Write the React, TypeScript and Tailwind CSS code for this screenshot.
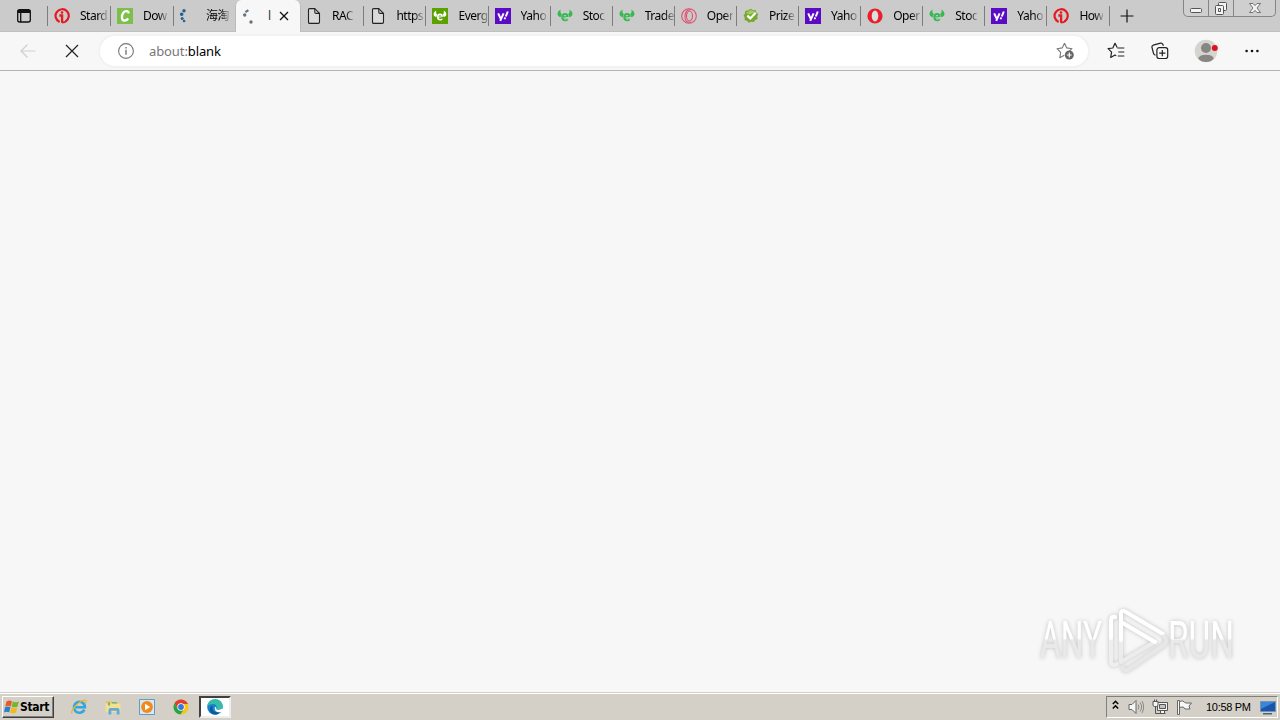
import { ReactNode } from 'react';
import clsx from 'clsx';

type TabItem = {
  title: string;
  icon: ReactNode;
};

const ITopIcon = () => (
  <svg className="size-4" viewBox="0 0 16 16" fill="none" stroke="#e51a23">
    <path d="M5.600 13.900A6.600 6.600 0 1 1 11.500 13.500" strokeWidth="2.200" />
    <path d="M5.400 7.500h2.700v7.200" strokeWidth="2.300" />
    <path d="M8.100 14.700q3.400-.2 4.800-2.600" strokeWidth="1.800" />
    <circle cx="8" cy="4.500" r="1.300" fill="#e51a23" stroke="none" />
  </svg>
);

const CIcon = () => (
  <svg className="size-4" viewBox="0 0 16 16">
    <path d="M0 0h16v16H0z" fill="#7cc04b" />
    <path
      d="M11.700 5.300C11.500 2.700 8.200 2.400 6.300 4.800 4.300 7.400 4.400 12.500 7.300 12.700c1.700.1 2.900-.8 3.900-2.200"
      fill="none"
      stroke="#fff"
      strokeWidth="2.300"
    />
  </svg>
);

const DotsIcon = () => (
  <svg className="size-4" viewBox="0 0 16 16" fill="#23618f">
    <circle cx="4" cy="2.800" r="1.700" />
    <circle cx="1.700" cy="6.200" r="1.800" />
    <circle cx="2.200" cy="10.400" r="1.500" />
    <circle cx="4.100" cy="13" r="1.300" />
  </svg>
);

const SpinnerIcon = () => (
  <svg className="size-4" viewBox="0 0 16 16" fill="#68747c">
    <path d="m1.800 3.300 3-2.100 1.200 1.700-3 2z" />
    <circle cx="1.700" cy="7" r="1.700" />
    <circle cx="8" cy="14" r="1.700" />
  </svg>
);

const PageIcon = () => (
  <svg
    className="size-4"
    viewBox="0 0 16 16"
    fill="#dadada"
    stroke="#222"
    strokeWidth="1.100"
    strokeLinejoin="round"
  >
    <path d="M2.500 1.800q0-1.200 1.200-1.200h5.100l4.700 4.800v8.700q0 1.300-1.200 1.300H3.700q-1.200 0-1.200-1.300z" />
    <path d="M8.800.8v3.400q0 1.200 1.200 1.200h3.400" fill="none" />
  </svg>
);

// horned "e" shared by the green and the boxed favicons
const BullShape = () => (
  <>
    <path d="M3.700 1.500C-.5 4-.7 8.200 3.900 9.300c-.1-1.400.3-2.300 1.200-3C3.600 5.400 3 3.700 3.700 1.500z" />
    <path d="M12.300 1.500c4.200 2.500 4.400 6.700-.2 7.800.1-1.400-.3-2.300-1.200-3 1.500-.9 2.100-2.600 1.400-4.800z" />
    <path
      d="M4.500 9h7c.2-2.400-1.200-4-3.500-4S4.300 6.800 4.300 9.200c0 2.500 1.500 4.100 3.800 4.100 1.700 0 2.800-.7 3.300-2.100H9.300c-.8.8-2.400.5-2.600-1h4.800zM6.700 8.300c.3-1.600 2.300-1.600 2.600 0z"
      fillRule="evenodd"
    />
  </>
);

const BullIcon = () => (
  <svg className="size-4" viewBox="0 0 16 16" fill="#35b950">
    <BullShape />
  </svg>
);

const BoxedBullIcon = () => (
  <svg className="size-4" viewBox="0 0 16 16">
    <path d="M0 0h16v16H0z" fill="#5ba100" />
    <g fill="#fff" transform="translate(1.200 1.200) scale(.85)">
      <BullShape />
    </g>
  </svg>
);

const YahooIcon = () => (
  <svg className="size-4" viewBox="0 0 16 16">
    <path d="M0 0h16v16H0z" fill="#5b0bc4" />
    <path
      d="m3.200 5.300 2.300 5M8.600 5.300 5.200 12.800M12.800 3.500l-2 5"
      fill="none"
      stroke="#fff"
      strokeWidth="2"
    />
    <circle cx="9.900" cy="10.300" r="1.100" fill="#fff" />
  </svg>
);

const OperaOutlineIcon = () => (
  <svg className="size-4" viewBox="0 0 16 16" fill="none" stroke="#e0506c" strokeWidth="1.100">
    <circle cx="8" cy="8" r="7.300" />
    <path d="M10 1.800Q4.500.8 4 8t6 6.200" />
    <ellipse cx="8.500" cy="8" rx="3" ry="5" />
  </svg>
);

const OperaIcon = () => (
  <svg className="size-4" viewBox="0 0 16 16">
    <circle cx="8" cy="8" r="7.600" fill="#e8202e" />
    <ellipse cx="8" cy="8" rx="3.300" ry="5.400" fill="#dedede" />
  </svg>
);

const PrizeIcon = () => (
  <svg className="size-4" viewBox="0 0 16 16">
    <path
      d="m8 .8 2 1.400 2.600-.1.700 2.300 1.900 1.700-.9 2.300.3 2.500-2.300 1-1.400 2.200-2.500-.4-2.500 1-1.800-1.800-2.500-.8.100-2.500L.6 7.500 2 5.500 2.200 3l2.500-.4z"
      fill="#75a92e"
    />
    <path d="m2.800 5 5-3 5 2-6 2.500z" fill="#a5cb65" />
    <path d="m4.300 7.600 3 2.800 5.400-5.600" fill="none" stroke="#fff" strokeWidth="2.200" />
  </svg>
);

const leadingTabs: TabItem[] = [
  { title: 'Stard', icon: <ITopIcon /> },
  { title: 'Dow', icon: <CIcon /> },
  { title: '海淘', icon: <DotsIcon /> },
];

const trailingTabs: TabItem[] = [
  { title: 'RAC', icon: <PageIcon /> },
  { title: 'https', icon: <PageIcon /> },
  { title: 'Everg', icon: <BoxedBullIcon /> },
  { title: 'Yaho', icon: <YahooIcon /> },
  { title: 'Stoc', icon: <BullIcon /> },
  { title: 'Trade', icon: <BullIcon /> },
  { title: 'Oper', icon: <OperaOutlineIcon /> },
  { title: 'Prize', icon: <PrizeIcon /> },
  { title: 'Yaho', icon: <YahooIcon /> },
  { title: 'Oper', icon: <OperaIcon /> },
  { title: 'Stoc', icon: <BullIcon /> },
  { title: 'Yaho', icon: <YahooIcon /> },
  { title: 'How', icon: <ITopIcon /> },
];

const Tab = ({ tab, className }: { tab: TabItem; className: string }) => (
  <div className={clsx('flex h-8 shrink-0 items-center', className)}>
    <span className="size-4 shrink-0">{tab.icon}</span>
    <span className="ml-[10px] whitespace-nowrap text-xs leading-4 tracking-[-0.5px] mask-r-from-65% mask-r-to-110%">
      {tab.title}
    </span>
  </div>
);

const Separator = () => <div className="h-5 w-px shrink-0 bg-[#7d7d7d]" />;

const WindowButtons = () => (
  <div className="ml-auto mr-[4px] flex h-[17px] self-start rounded-b-[5px] border border-t-0 border-[#858585] bg-[#cfcfcf]">
    <div className="flex w-[25px] justify-center border-r border-[#858585]">
      <svg className="h-4 w-6" viewBox="0 0 24 16" fill="#f4f4f4" stroke="#555">
        <rect x="6.500" y="8.500" width="11" height="4" rx="1" />
      </svg>
    </div>
    <div className="flex w-[25px] justify-center border-r border-[#858585]">
      <svg className="h-4 w-6" viewBox="0 0 24 16" fill="#f4f4f4" stroke="#555">
        <rect x="9.500" y="2.500" width="8" height="8" rx="1" />
        <rect x="6.500" y="5.500" width="8" height="9" rx="1" />
        <path d="M9.500 8.500h2v3h-2z" />
      </svg>
    </div>
    <div className="flex w-[41px] justify-center">
      <svg className="h-4 w-6" viewBox="0 0 24 16" fill="#f4f4f4" stroke="#666" strokeWidth=".9">
        <path d="M6.500 3.500h3.500l2 2.200 2-2.200h3.500l-3.500 4.500 3.500 4.500H14l-2-2.200-2 2.200H6.500L10 8z" />
      </svg>
    </div>
  </div>
);

const TabStrip = () => (
  <div className="flex h-8 items-center border-b border-[#c0c0c0] bg-[#cbcbcb]">
    <div className="flex w-[47px] shrink-0 items-center pl-4">
      <svg className="size-4" viewBox="0 0 16 16" fill="none" stroke="#111" strokeWidth="1.300">
        <rect x="1.700" y="1.700" width="12.600" height="12.300" rx="2" />
        <path d="M1.700 3.500h12.600" strokeWidth="3" />
        <path d="M4.700 4v10" />
      </svg>
    </div>
    {leadingTabs.map((tab) => (
      <div key={tab.title} className="-mr-px flex items-center">
        <Separator />
        <Tab tab={tab} className="w-[63px] pl-[6px]" />
      </div>
    ))}
    <div className="-ml-px mr-px flex h-8 w-[66px] shrink-0 items-center rounded-t-[6px] border-x border-[#bbb] bg-[#f7f7f7] pl-[7px]">
      <SpinnerIcon />
      <span className="ml-[9px] w-[5px] text-xs leading-4 text-[#333]">l</span>
      <svg
        className="ml-[6px] size-[10px]"
        viewBox="0 0 10 10"
        stroke="#111"
        strokeWidth="1.300"
      >
        <path d="m1 1 8 8M9 1 1 9" />
      </svg>
    </div>
    {trailingTabs.map((tab, i) => (
      <div key={i} className="-ml-px flex items-center">
        <Tab
          tab={tab}
          className={i === 0 ? 'w-[62.4px] pl-[5px]' : 'w-[62.1px] pl-[7px]'}
        />
        <Separator />
      </div>
    ))}
    <svg className="ml-[10px] size-[14px] shrink-0" viewBox="0 0 14 14" stroke="#111" strokeWidth="1.200">
      <path d="M7 .5v13M.5 7h13" />
    </svg>
    <WindowButtons />
  </div>
);

const Toolbar = () => (
  <div className="flex h-[39px] items-center border-b border-[#b4b4b4] bg-[#f7f7f7] pl-5">
    <svg className="size-4" viewBox="0 0 16 16" fill="none" stroke="#cfcfcf" strokeWidth="1.200">
      <path d="M15.500 8H1M7.500 1.500 1 8l6.500 6.500" />
    </svg>
    <svg className="ml-[29px] size-[14px]" viewBox="0 0 14 14" stroke="#222" strokeWidth="1.200">
      <path d="m1 1 12 12M13 1 1 13" />
    </svg>
    <div className="ml-[21px] flex h-[30px] w-[988px] items-center rounded-full bg-white pl-[18px] pr-[14px] ring-2 ring-[#f2f2f2]">
      <svg className="size-4" viewBox="0 0 16 16" fill="none" stroke="#777" strokeWidth="1.100">
        <circle cx="8" cy="8" r="7.400" />
        <path d="M8 6.700v5M8 4v1.400" strokeWidth="1.400" />
      </svg>
      <span className="ml-[15px] text-[13px] leading-4 tracking-[-0.1px] text-[#767676]">
        about:<span className="text-black">blank</span>
      </span>
      <svg className="ml-auto size-[18px]" viewBox="0 0 18 18" fill="none">
        <path
          d="m8.500 1.200 2.300 4.700 5.200.8-3.700 3.500M8.500 1.200 6.200 5.900l-5.200.8 3.700 3.700-.9 5.300 4.500-2.500"
          stroke="#777"
          strokeWidth="1.100"
          strokeLinejoin="round"
        />
        <circle cx="13.300" cy="13" r="4.500" fill="#666" />
        <path d="M13.300 10.600v4.800M10.900 13h4.800" stroke="#fff" strokeWidth="1.200" />
      </svg>
    </div>
    <svg className="ml-[19px] size-[18px]" viewBox="0 0 18 18" fill="none" stroke="#222" strokeWidth="1.200" strokeLinejoin="round">
      <path d="M10.200 5.500 8 1.300 5.800 6l-4.700.7 3.500 3.500-.9 5.200 4.300-2.400 1.200.7" />
      <path d="M10.300 6h7M11.300 10h6M10.800 14h6.500" />
    </svg>
    <svg className="ml-[26px] size-[18px]" viewBox="0 0 18 18" fill="none" stroke="#222" strokeWidth="1.200" strokeLinejoin="round">
      <path d="M4.500 13.200q-1.600-.2-2-1.800L1 5.500Q.6 3.800 2.200 3.200L9.600 1.200q1.600-.3 2.300 1.300l.5 1.300" />
      <rect x="5.900" y="5.700" width="10.800" height="10.800" rx="2.200" />
      <path d="M11.300 8v6.200M8.200 11.100h6.200" />
    </svg>
    <svg className="ml-[25px] size-6" viewBox="0 0 24 24">
      <circle cx="12" cy="12" r="11.300" fill="#d5d4d0" />
      <circle cx="12" cy="9" r="5" fill="#888683" />
      <path d="M4.200 19.500Q5 15.700 12 15.700t7.800 3.800Q17 23 12 23t-7.800-3.500z" fill="#888683" />
      <circle cx="20.800" cy="9" r="3" fill="#dc1420" />
    </svg>
    <svg className="ml-[27px] h-1 w-[14px]" viewBox="0 0 14 4" fill="#111">
      <circle cx="1.600" cy="2" r="1.300" />
      <circle cx="7" cy="2" r="1.300" />
      <circle cx="12.400" cy="2" r="1.300" />
    </svg>
  </div>
);

const Watermark = () => (
  <svg className="h-[76px] w-[210px] drop-shadow-[0_0_2px_rgba(0,0,0,0.22)]" viewBox="0 0 210 76">
    <defs>
      <linearGradient id="fade" x1="0" y1="14" x2="0" y2="52" gradientUnits="userSpaceOnUse">
        <stop offset="0.48" stopColor="#fff" />
        <stop offset="0.54" stopColor="#e9e9e9" />
      </linearGradient>
    </defs>
    <g
      className="font-['Roboto','Liberation_Sans',sans-serif]"
      fill="url(#fade)"
      fontSize="52"
    >
      <text x="9" y="52" textLength="62" lengthAdjust="spacingAndGlyphs">
        ANY
      </text>
      <text x="137" y="52" textLength="66" lengthAdjust="spacingAndGlyphs">
        RUN
      </text>
    </g>
    <g fill="none" strokeWidth="4" strokeLinejoin="round" strokeLinecap="round">
      <path d="M84 11q-4-1-4 4v40q0 6 6 3" stroke="#efefef" />
      <path d="M80 32V15q0-5 4-4" stroke="#fff" />
      <path d="M90 14v42l32-19" stroke="#ececec" />
      <path d="M90 34V8q0-5 5-2l37 22" stroke="#fff" />
      <path d="M90 16l34 20" stroke="#fff" />
      <path d="M92 62q1 4 6 1l35-24q4-4 0-9" stroke="#e7e7e7" />
    </g>
  </svg>
);

const WindowsFlag = () => (
  <svg className="size-4" viewBox="0 0 16 16">
    <path d="M2.500 2.500Q5 .7 8 2.200L6.800 7.400Q4 6 1.200 7.500z" fill="#e85a25" />
    <path d="M8.800 2.500Q12 4 15 2.500l-1.500 5.200q-3 1.300-5.900 0z" fill="#78b52c" />
    <path d="M1 8.300q2.700-1.500 5.500 0l-1.300 5q-3-1.300-5.200.2z" fill="#2f7dc8" />
    <path d="M7.400 8.500q3 1.400 5.900.2L12 13.600q-3 1.400-5.900 0z" fill="#f2b91c" />
  </svg>
);

const IeIcon = () => (
  <svg className="size-4" viewBox="0 0 16 16" fill="none">
    <path d="M13.400 10.600a5.500 5.500 0 1 1 .5-2.400H4" stroke="#32a6df" strokeWidth="2.600" />
    <path d="M1.300 14.500Q-.8 12.800 4.500 7 11.300 0 14.700 1.300q1 .8-.5 3.200" stroke="#e8b62e" strokeWidth="1.200" />
  </svg>
);

const FolderIcon = () => (
  <svg className="size-4" viewBox="0 0 16 16">
    <path d="M1 2h5l1 1.500h7.500V13H1z" fill="#e5c463" />
    <path d="M.5 4.500h15V13H.5z" fill="#f5df91" />
    <path d="M3.500 15.500V11q0-2 2-2h7q2 0 2 2v4.500h-2.800v-3.800H6.300v3.800z" fill="#61abd7" />
    <path d="M3 3.500h2v3H3zM7 3h5v1.500H7z" fill="#71b67b" />
  </svg>
);

const PlayerIcon = () => (
  <svg className="size-4" viewBox="0 0 16 16">
    <path d="M.5.500h15v15H.5z" fill="#d4e8f7" stroke="#639bc5" />
    <circle cx="8" cy="8" r="5.900" fill="#f18a18" />
    <path d="m6 4.700 5.200 3.300L6 11.300z" fill="#fff" />
  </svg>
);

const ChromeIcon = () => (
  <svg className="size-4" viewBox="0 0 16 16">
    <circle cx="8" cy="8" r="7.500" fill="#f8c518" />
    <path d="M1.500 4.200a7.500 7.500 0 0 1 13 0L15 5H8L4.700 9.600z" fill="#df4031" />
    <path d="M1.500 4.200 5 10l5.300 1.200-3 4.200A7.500 7.500 0 0 1 1.500 4.200z" fill="#26a34b" />
    <circle cx="8" cy="8" r="3.700" fill="#fff" />
    <circle cx="8" cy="8" r="2.900" fill="#3577dd" />
  </svg>
);

const EdgeIcon = () => (
  <svg className="size-4" viewBox="0 0 16 16">
    <circle cx="8" cy="8" r="7.800" fill="#1684cf" />
    <path d="M.3 7.400C.7 3 4 .2 8 .2c5 0 7.800 3.500 7.800 6.500 0 2.600-2 3.800-4.200 3.800-1.600 0-2.500-.5-2.300-1.100C10.700 7.400 8.800 5 6 5 3.300 5 1.200 6 .3 7.400z" fill="#36bda7" />
    <path d="M5.700 6.800c-1.500 4 1.500 7.700 7.500 6.500-3 3.400-9.400 3.200-10.300-1.800-.4-2.300.8-4.500 2.800-4.700z" fill="#125696" />
    <path d="M9.300 9.400c-.4.9.7 1.500 2.600 1.400q2-.1 3.500-1.500l.6 3-2.500.7C9 14 7 10.500 8 7.700q1.200.4 1.300 1.700z" fill="#fff" />
  </svg>
);

const Taskbar = () => (
  <div className="flex h-[26px] items-center bg-[#d4d0c8] pl-[2px] pr-[2px] text-black">
    <button className="flex h-[22px] w-[52px] items-center border border-b-[#404040] border-l-white border-r-[#404040] border-t-white pl-px font-['DejaVu_Sans_Condensed','DejaVu_Sans',sans-serif] text-xs font-bold tracking-[-0.3px] shadow-[inset_-1px_-1px_0_#808080]">
      <WindowsFlag />
      <span>Start</span>
    </button>
    <div className="ml-[17px] flex items-center gap-[18px]">
      <IeIcon />
      <FolderIcon />
      <PlayerIcon />
      <ChromeIcon />
    </div>
    <div className="ml-[10px] flex h-[22px] w-8 items-center justify-center border-2 border-b-[#eee] border-l-[#404040] border-r-[#eee] border-t-[#404040] bg-white">
      <EdgeIcon />
    </div>
    <div className="ml-auto flex h-[22px] w-[172px] items-center border border-b-white border-l-[#808080] border-r-white border-t-[#808080] pl-[5px]">
      <svg className="mb-1 h-[10px] w-[7px]" viewBox="0 0 7 10" fill="none" stroke="#000" strokeWidth="1.500">
        <path d="m.8 4 2.700-2.700L6.200 4M.8 8.500l2.700-2.700 2.700 2.700" />
      </svg>
      <svg className="ml-[9px] size-4" viewBox="0 0 16 16" fill="none" stroke="#888">
        <path d="M1 5.500h3l4-4v13l-4-4H1z" fill="#f7f7f7" stroke="#666" />
        <path d="M10 5.500q2 2.500 0 5M12 3.500q3.300 4.500 0 9M14 2q3.300 6 0 12" />
      </svg>
      <svg className="ml-2 size-4" viewBox="0 0 16 16" fill="#f5f5f5" stroke="#555">
        <path d="M5.500 3.500h10v8h-10zM8.500 11.500h4v3h-4z" />
        <path d="M7.500 5.500h6v4h-6z" fill="#c6c3be" />
        <path d="M1 2.500h5v4l-1.500 1h-2L1 6.500zM2.500.5v2M4.500.5v2" />
        <path d="M3.500 7.500v7h10" fill="none" />
      </svg>
      <svg className="ml-2 size-4" viewBox="0 0 16 16" fill="#f7f7f7" stroke="#666">
        <path d="M1.500 1.500h2v14h-2zM3.500 2.500q3-1.500 5 .5l1 1h6l-2.500 3 1 3H9l-1-1.500q-2-1-4.500 0z" />
      </svg>
      <span className="ml-[14px] whitespace-nowrap font-['Liberation_Sans',sans-serif] text-[11px] leading-4 tracking-[-0.3px]">
        10:58 PM
      </span>
      <svg className="ml-auto mr-px size-4" viewBox="0 0 16 16">
        <path d="M.5 2.500h15v10H.5z" fill="#1756ac" stroke="#7893ae" />
        <path d="M1 3h14L1 10z" fill="#3c86da" />
        <path d="M3 14h9v1.500H3z" fill="#48647c" />
      </svg>
    </div>
  </div>
);

const App = () => {
  return (
    <div className="flex h-[720px] w-[1280px] flex-col overflow-hidden bg-[#f7f7f7] font-['Noto_Sans','Noto_Sans_CJK_SC',sans-serif] text-black">
      <TabStrip />
      <Toolbar />
      <main className="flex flex-1 items-end justify-end pb-[10px] pr-[39px]">
        <Watermark />
      </main>
      <div className="h-px bg-[#d4d0c8]" />
      <div className="h-px bg-white" />
      <Taskbar />
    </div>
  );
};

export default App;
